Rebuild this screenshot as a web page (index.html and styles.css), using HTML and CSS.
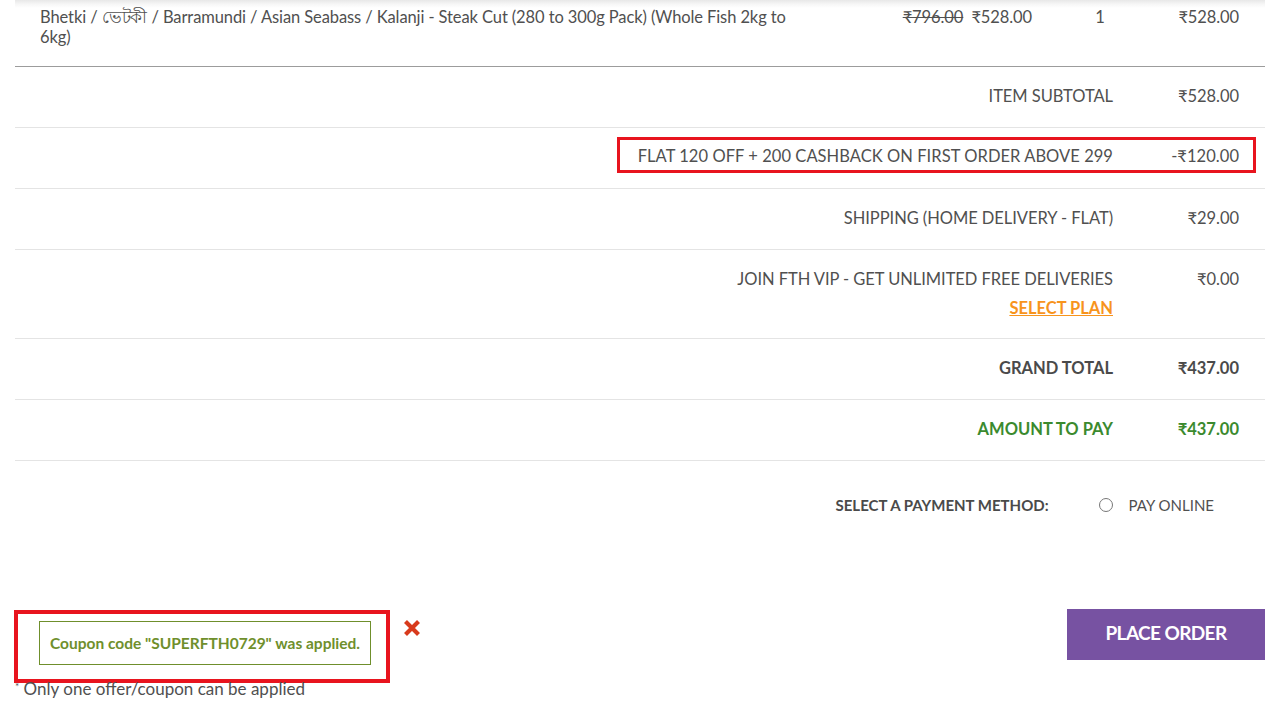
FILE: index.html
```html
<!DOCTYPE html>
<html lang="en">
<head>
<meta charset="utf-8">
<title>Cart</title>
<link rel="stylesheet" href="styles.css">
</head>
<body>
<div class="cart">
  <div class="item-row">
    <div class="item-name">Bhetki / ভেটকী / Barramundi / Asian Seabass / Kalanji - Steak Cut (280 to 300g Pack) (Whole Fish 2kg to 6kg)</div>
    <div class="item-price"><s class="old">₹796.00</s> <span>₹528.00</span></div>
    <div class="item-qty">1</div>
    <div class="item-total">₹528.00</div>
  </div>

  <div class="sum-row">
    <div class="sum-line"><span class="label">ITEM SUBTOTAL</span><span class="value">₹528.00</span></div>
  </div>
  <div class="sum-row">
    <div class="sum-line highlight"><span class="label">FLAT 120 OFF + 200 CASHBACK ON FIRST ORDER ABOVE 299</span><span class="value">-₹120.00</span></div>
  </div>
  <div class="sum-row">
    <div class="sum-line"><span class="label">SHIPPING (HOME DELIVERY - FLAT)</span><span class="value">₹29.00</span></div>
  </div>
  <div class="sum-row tall">
    <div class="sum-line"><span class="label">JOIN FTH VIP - GET UNLIMITED FREE DELIVERIES<a class="plan" href="#">SELECT PLAN</a></span><span class="value">₹0.00</span></div>
  </div>
  <div class="sum-row bold">
    <div class="sum-line"><span class="label">GRAND TOTAL</span><span class="value">₹437.00</span></div>
  </div>
  <div class="sum-row bold green">
    <div class="sum-line"><span class="label">AMOUNT TO PAY</span><span class="value">₹437.00</span></div>
  </div>

  <div class="payment">
    <span class="pay-label">SELECT A PAYMENT METHOD:</span>
    <label class="pay-option"><span class="radio"></span>PAY ONLINE</label>
  </div>

  <div class="bottom">
    <div class="coupon-area">
      <div class="coupon-line">
        <div class="coupon-frame">
          <div class="coupon-msg">Coupon code "SUPERFTH0729" was applied.</div>
        </div>
        <span class="remove" aria-label="remove">
          <svg width="18" height="18" viewBox="0 0 18 18"><path d="M2.5 2.5 L15.5 15.5 M15.5 2.5 L2.5 15.5" stroke="#d83a1c" stroke-width="4.2" stroke-linecap="butt"/></svg>
        </span>
      </div>
      <div class="note"><span class="star">*</span> Only one offer/coupon can be applied</div>
    </div>
    <button class="place">PLACE ORDER</button>
  </div>
</div>
</body>
</html>
```
FILE: styles.css
```css
html, body {
  margin: 0;
  padding: 0;
  background: #fff;
}
body {
  font-family: "Lato", "DejaVu Sans", sans-serif;
  font-size: 16.5px;
  color: #505050;
}
.cart {
  width: 1250px;
  margin-left: 15px;
  background: linear-gradient(to bottom, #e8e8e8 0, #f6f6f6 4px, #fff 8px) no-repeat;
}
.item-row {
  display: grid;
  grid-template-columns: 760px 240px 120px 79px;
  padding: 7px 26px 0 25px;
  height: 59px;
  border-bottom: 1px solid #9c9c9c;
  line-height: 20px;
  letter-spacing: -0.1px;
}
.item-price {
  text-align: right;
  padding-right: 8px;
}
.item-price .old {
  margin-right: 4px;
}
.item-qty {
  text-align: center;
}
.item-total {
  text-align: right;
}
.sum-row {
  height: 60px;
  border-bottom: 1px solid #e4e4e4;
  display: flex;
  justify-content: flex-end;
  align-items: flex-start;
  padding-right: 26px;
  line-height: 20px;
  letter-spacing: -0.05px;
}
.sum-row.tall {
  height: 88px;
}
.sum-line {
  display: flex;
  padding-top: 19px;
}
.sum-line .label {
  text-align: right;
  display: flex;
  flex-direction: column;
  align-items: flex-end;
}
.sum-line .value {
  width: 126px;
  text-align: right;
}
.sum-line.highlight {
  margin-top: 9px;
  margin-right: -17px;
  padding: 2px 14px 0 18px;
  height: 28px;
  align-items: center;
  border: 3px solid #e8141e;
  letter-spacing: 0.05px;
}
.plan {
  margin-top: 9px;
  color: #f7941d;
  font-weight: 700;
  letter-spacing: 0;
  text-decoration: underline;
}
.sum-row.bold {
  font-weight: 700;
  color: #4a4a4a;
  letter-spacing: 0;
}
.sum-row.green {
  color: #3b8a2e;
}
.payment {
  display: flex;
  justify-content: flex-end;
  align-items: center;
  padding: 34px 51px 0 0;
  height: 20px;
  font-size: 15px;
}
.pay-label {
  font-weight: 700;
  color: #4a4a4a;
}
.pay-option {
  display: flex;
  align-items: center;
  margin-left: 50px;
}
.radio {
  width: 12px;
  height: 12px;
  border: 1px solid #777;
  border-radius: 50%;
  margin-right: 16px;
}
.bottom {
  display: flex;
  justify-content: space-between;
  align-items: flex-start;
  margin-top: 94px;
}
.coupon-area {
  margin-left: -1px;
}
.coupon-line {
  display: flex;
  align-items: flex-start;
}
.coupon-frame {
  border: 4px solid #e8141e;
  padding: 7px 15px 14px 21px;
  margin-top: 1px;
}
.coupon-msg {
  border: 1px solid #6f8f2c;
  height: 42px;
  padding: 0 10px;
  display: flex;
  align-items: center;
  color: #6f8f2c;
  font-weight: 700;
  font-size: 15.5px;
}
.remove {
  display: block;
  margin: 10px 0 0 13px;
  width: 18px;
  height: 18px;
}
.remove svg {
  display: block;
}
.note {
  margin-left: 1px;
  line-height: 18px;
  margin-top: -3px;
  font-size: 17px;
}
.note .star {
  font-size: 10px;
  vertical-align: 5px;
  line-height: 10px;
}
.place {
  width: 198px;
  height: 51px;
  border: 0;
  background: #7752a2;
  color: #fff;
  font-family: "Lato", "DejaVu Sans", sans-serif;
  font-weight: 700;
  font-size: 19px;
  letter-spacing: -0.6px;
  padding: 0 0 5px 0;
  cursor: pointer;
}
```
